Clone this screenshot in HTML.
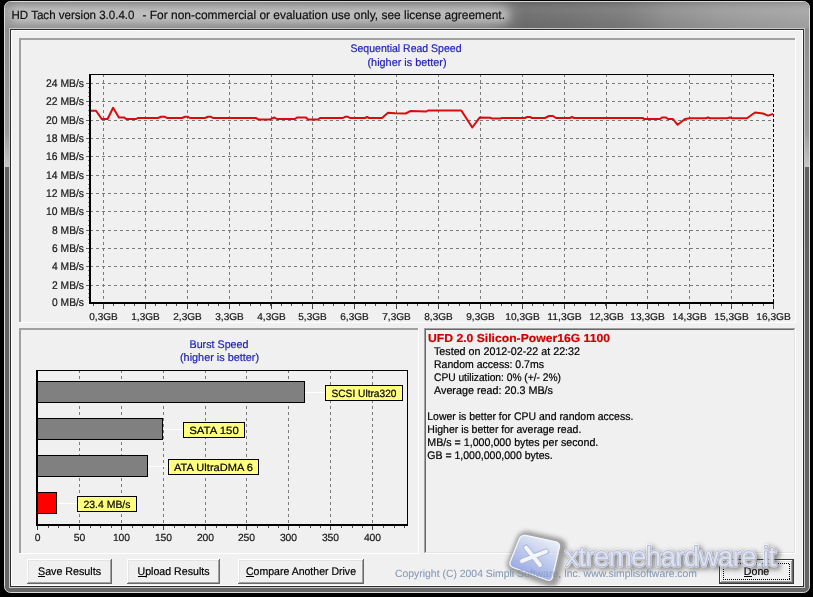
<!DOCTYPE html>
<html><head><meta charset="utf-8"><style>
html,body{margin:0;padding:0;background:#000;width:813px;height:597px;overflow:hidden}
svg{display:block;font-family:"Liberation Sans", sans-serif;will-change:transform}
</style></head><body>
<svg width="813" height="597" viewBox="0 0 813 597" shape-rendering="crispEdges" text-rendering="geometricPrecision">
<defs>
<linearGradient id="side" x1="0" y1="0" x2="0" y2="597" gradientUnits="userSpaceOnUse">
 <stop offset="0" stop-color="#8c8c8c"/>
 <stop offset="0.22" stop-color="#9a9a9a"/>
 <stop offset="0.279" stop-color="#c6c6c6"/>
 <stop offset="0.2800" stop-color="#616161"/>
 <stop offset="1" stop-color="#666"/>
</linearGradient>
<linearGradient id="titleH" x1="0" y1="0" x2="813" y2="0" gradientUnits="userSpaceOnUse">
 <stop offset="0" stop-color="#9a9a9a"/>
 <stop offset="0.60" stop-color="#8a8a8a"/>
 <stop offset="0.645" stop-color="#6e6e6e"/>
 <stop offset="0.70" stop-color="#727272"/>
 <stop offset="0.77" stop-color="#7c7c7c"/>
 <stop offset="0.82" stop-color="#8e8e8e"/>
 <stop offset="0.89" stop-color="#9c9c9c"/>
 <stop offset="1" stop-color="#a6a6a6"/>
</linearGradient>
<linearGradient id="titleV" x1="0" y1="0" x2="0" y2="28" gradientUnits="userSpaceOnUse">
 <stop offset="0" stop-color="#000" stop-opacity="0.18"/>
 <stop offset="0.4" stop-color="#fff" stop-opacity="0.05"/>
 <stop offset="1" stop-color="#000" stop-opacity="0.05"/>
</linearGradient>
<filter id="blur4" x="-20%" y="-50%" width="140%" height="200%"><feGaussianBlur stdDeviation="4"/></filter>
<filter id="blur3" x="-20%" y="-50%" width="140%" height="200%"><feGaussianBlur stdDeviation="2.5"/></filter>
<filter id="blur2" x="-20%" y="-50%" width="140%" height="200%"><feGaussianBlur stdDeviation="2"/></filter>
<linearGradient id="logoG" x1="0.8" y1="0" x2="0.2" y2="1">
 <stop offset="0" stop-color="#f2f5fc"/>
 <stop offset="0.45" stop-color="#b4c2ec"/>
 <stop offset="1" stop-color="#6f88de"/>
</linearGradient>

</defs>
<rect x="0" y="0" width="813" height="597" fill="#000"/>
<rect x="4.5" y="1.5" width="805" height="591" rx="6" ry="6" fill="url(#side)" stroke="#dadada" stroke-width="1" shape-rendering="geometricPrecision"/>
<path d="M5,8 Q5,2 11,2 L803,2 Q809,2 809,8 L809,28 L5,28 Z" fill="url(#titleH)" shape-rendering="geometricPrecision"/>
<path d="M5,8 Q5,2 11,2 L803,2 Q809,2 809,8 L809,28 L5,28 Z" fill="url(#titleV)" shape-rendering="geometricPrecision"/>
<rect x="10" y="7" width="500" height="16" rx="8" fill="#cfcfcf" opacity="0.75" filter="url(#blur4)"/>
<text x="11.5" y="19" font-size="12" fill="#101010" text-anchor="start" font-weight="normal" stroke="#101010" stroke-width="0.2" textLength="123" lengthAdjust="spacingAndGlyphs" >HD Tach version 3.0.4.0</text>
<text x="142.5" y="19" font-size="12" fill="#101010" text-anchor="start" font-weight="normal" stroke="#101010" stroke-width="0.2" textLength="362.5" lengthAdjust="spacingAndGlyphs" >- For non-commercial or evaluation use only, see license agreement.</text>
<rect x="9.5" y="28.5" width="795" height="559" fill="none" stroke="#c8c8c8"/>
<rect x="10.5" y="29.5" width="793" height="557" fill="none" stroke="#2c2c2c"/>
<rect x="11" y="30" width="792" height="556" fill="#ffffff"/>
<rect x="12" y="31" width="790" height="554" fill="#f0f0f0"/>
<rect x="19" y="38" width="776" height="2" fill="#a0a0a0"/>
<rect x="19" y="38" width="2" height="284" fill="#a0a0a0"/>
<rect x="19" y="322" width="777" height="1" fill="#ffffff"/>
<rect x="795" y="38" width="1" height="285" fill="#ffffff"/>
<rect x="19" y="328" width="399" height="2" fill="#a0a0a0"/>
<rect x="19" y="328" width="2" height="225" fill="#a0a0a0"/>
<rect x="19" y="553" width="400" height="1" fill="#ffffff"/>
<rect x="418" y="328" width="1" height="226" fill="#ffffff"/>
<rect x="424" y="328" width="371" height="1" fill="#a0a0a0"/>
<rect x="424" y="328" width="1" height="225" fill="#a0a0a0"/>
<rect x="425" y="329" width="369" height="1" fill="#696969"/>
<rect x="425" y="329" width="1" height="223" fill="#696969"/>
<rect x="424" y="553" width="372" height="1" fill="#ffffff"/>
<rect x="795" y="328" width="1" height="226" fill="#ffffff"/>
<rect x="425" y="552" width="370" height="1" fill="#e3e3e3"/>
<rect x="794" y="329" width="1" height="224" fill="#e3e3e3"/>
<text x="406" y="52" font-size="11" fill="#1e1eb8" text-anchor="middle" font-weight="normal" stroke="#1e1eb8" stroke-width="0.2" textLength="111" lengthAdjust="spacingAndGlyphs" >Sequential Read Speed</text>
<text x="407" y="66" font-size="11" fill="#1e1eb8" text-anchor="middle" font-weight="normal" stroke="#1e1eb8" stroke-width="0.2" textLength="79" lengthAdjust="spacingAndGlyphs" >(higher is better)</text>
<line x1="90" y1="83.5" x2="773" y2="83.5" stroke="#7a7a7a" stroke-dasharray="3,3"/>
<line x1="86" y1="83.5" x2="89" y2="83.5" stroke="#6a6a6a"/>
<text x="84" y="87" font-size="11" fill="#161616" text-anchor="end" font-weight="normal" stroke="#161616" stroke-width="0.2" textLength="38" lengthAdjust="spacingAndGlyphs" >24 MB/s</text>
<rect x="88" y="87" width="1" height="1" fill="#8a8a8a"/>
<rect x="88" y="92" width="1" height="1" fill="#8a8a8a"/>
<rect x="88" y="96" width="1" height="1" fill="#8a8a8a"/>
<line x1="90" y1="101.5" x2="773" y2="101.5" stroke="#7a7a7a" stroke-dasharray="3,3"/>
<line x1="86" y1="101.5" x2="89" y2="101.5" stroke="#6a6a6a"/>
<text x="84" y="105" font-size="11" fill="#161616" text-anchor="end" font-weight="normal" stroke="#161616" stroke-width="0.2" textLength="38" lengthAdjust="spacingAndGlyphs" >22 MB/s</text>
<rect x="88" y="105" width="1" height="1" fill="#8a8a8a"/>
<rect x="88" y="110" width="1" height="1" fill="#8a8a8a"/>
<rect x="88" y="115" width="1" height="1" fill="#8a8a8a"/>
<line x1="90" y1="120.5" x2="773" y2="120.5" stroke="#7a7a7a" stroke-dasharray="3,3"/>
<line x1="86" y1="120.5" x2="89" y2="120.5" stroke="#6a6a6a"/>
<text x="84" y="124" font-size="11" fill="#161616" text-anchor="end" font-weight="normal" stroke="#161616" stroke-width="0.2" textLength="38" lengthAdjust="spacingAndGlyphs" >20 MB/s</text>
<rect x="88" y="124" width="1" height="1" fill="#8a8a8a"/>
<rect x="88" y="129" width="1" height="1" fill="#8a8a8a"/>
<rect x="88" y="133" width="1" height="1" fill="#8a8a8a"/>
<line x1="90" y1="138.5" x2="773" y2="138.5" stroke="#7a7a7a" stroke-dasharray="3,3"/>
<line x1="86" y1="138.5" x2="89" y2="138.5" stroke="#6a6a6a"/>
<text x="84" y="142" font-size="11" fill="#161616" text-anchor="end" font-weight="normal" stroke="#161616" stroke-width="0.2" textLength="38" lengthAdjust="spacingAndGlyphs" >18 MB/s</text>
<rect x="88" y="142" width="1" height="1" fill="#8a8a8a"/>
<rect x="88" y="147" width="1" height="1" fill="#8a8a8a"/>
<rect x="88" y="151" width="1" height="1" fill="#8a8a8a"/>
<line x1="90" y1="156.5" x2="773" y2="156.5" stroke="#7a7a7a" stroke-dasharray="3,3"/>
<line x1="86" y1="156.5" x2="89" y2="156.5" stroke="#6a6a6a"/>
<text x="84" y="160" font-size="11" fill="#161616" text-anchor="end" font-weight="normal" stroke="#161616" stroke-width="0.2" textLength="38" lengthAdjust="spacingAndGlyphs" >16 MB/s</text>
<rect x="88" y="160" width="1" height="1" fill="#8a8a8a"/>
<rect x="88" y="165" width="1" height="1" fill="#8a8a8a"/>
<rect x="88" y="170" width="1" height="1" fill="#8a8a8a"/>
<line x1="90" y1="175.5" x2="773" y2="175.5" stroke="#7a7a7a" stroke-dasharray="3,3"/>
<line x1="86" y1="175.5" x2="89" y2="175.5" stroke="#6a6a6a"/>
<text x="84" y="179" font-size="11" fill="#161616" text-anchor="end" font-weight="normal" stroke="#161616" stroke-width="0.2" textLength="38" lengthAdjust="spacingAndGlyphs" >14 MB/s</text>
<rect x="88" y="179" width="1" height="1" fill="#8a8a8a"/>
<rect x="88" y="184" width="1" height="1" fill="#8a8a8a"/>
<rect x="88" y="188" width="1" height="1" fill="#8a8a8a"/>
<line x1="90" y1="193.5" x2="773" y2="193.5" stroke="#7a7a7a" stroke-dasharray="3,3"/>
<line x1="86" y1="193.5" x2="89" y2="193.5" stroke="#6a6a6a"/>
<text x="84" y="197" font-size="11" fill="#161616" text-anchor="end" font-weight="normal" stroke="#161616" stroke-width="0.2" textLength="38" lengthAdjust="spacingAndGlyphs" >12 MB/s</text>
<rect x="88" y="197" width="1" height="1" fill="#8a8a8a"/>
<rect x="88" y="202" width="1" height="1" fill="#8a8a8a"/>
<rect x="88" y="206" width="1" height="1" fill="#8a8a8a"/>
<line x1="90" y1="211.5" x2="773" y2="211.5" stroke="#7a7a7a" stroke-dasharray="3,3"/>
<line x1="86" y1="211.5" x2="89" y2="211.5" stroke="#6a6a6a"/>
<text x="84" y="215" font-size="11" fill="#161616" text-anchor="end" font-weight="normal" stroke="#161616" stroke-width="0.2" textLength="38" lengthAdjust="spacingAndGlyphs" >10 MB/s</text>
<rect x="88" y="215" width="1" height="1" fill="#8a8a8a"/>
<rect x="88" y="220" width="1" height="1" fill="#8a8a8a"/>
<rect x="88" y="225" width="1" height="1" fill="#8a8a8a"/>
<line x1="90" y1="230.5" x2="773" y2="230.5" stroke="#7a7a7a" stroke-dasharray="3,3"/>
<line x1="86" y1="230.5" x2="89" y2="230.5" stroke="#6a6a6a"/>
<text x="84" y="234" font-size="11" fill="#161616" text-anchor="end" font-weight="normal" stroke="#161616" stroke-width="0.2" textLength="32" lengthAdjust="spacingAndGlyphs" >8 MB/s</text>
<rect x="88" y="234" width="1" height="1" fill="#8a8a8a"/>
<rect x="88" y="239" width="1" height="1" fill="#8a8a8a"/>
<rect x="88" y="243" width="1" height="1" fill="#8a8a8a"/>
<line x1="90" y1="248.5" x2="773" y2="248.5" stroke="#7a7a7a" stroke-dasharray="3,3"/>
<line x1="86" y1="248.5" x2="89" y2="248.5" stroke="#6a6a6a"/>
<text x="84" y="252" font-size="11" fill="#161616" text-anchor="end" font-weight="normal" stroke="#161616" stroke-width="0.2" textLength="32" lengthAdjust="spacingAndGlyphs" >6 MB/s</text>
<rect x="88" y="252" width="1" height="1" fill="#8a8a8a"/>
<rect x="88" y="257" width="1" height="1" fill="#8a8a8a"/>
<rect x="88" y="261" width="1" height="1" fill="#8a8a8a"/>
<line x1="90" y1="266.5" x2="773" y2="266.5" stroke="#7a7a7a" stroke-dasharray="3,3"/>
<line x1="86" y1="266.5" x2="89" y2="266.5" stroke="#6a6a6a"/>
<text x="84" y="270" font-size="11" fill="#161616" text-anchor="end" font-weight="normal" stroke="#161616" stroke-width="0.2" textLength="32" lengthAdjust="spacingAndGlyphs" >4 MB/s</text>
<rect x="88" y="270" width="1" height="1" fill="#8a8a8a"/>
<rect x="88" y="275" width="1" height="1" fill="#8a8a8a"/>
<rect x="88" y="280" width="1" height="1" fill="#8a8a8a"/>
<line x1="90" y1="285.5" x2="773" y2="285.5" stroke="#7a7a7a" stroke-dasharray="3,3"/>
<line x1="86" y1="285.5" x2="89" y2="285.5" stroke="#6a6a6a"/>
<text x="84" y="289" font-size="11" fill="#161616" text-anchor="end" font-weight="normal" stroke="#161616" stroke-width="0.2" textLength="32" lengthAdjust="spacingAndGlyphs" >2 MB/s</text>
<rect x="88" y="289" width="1" height="1" fill="#8a8a8a"/>
<rect x="88" y="293" width="1" height="1" fill="#8a8a8a"/>
<rect x="88" y="297" width="1" height="1" fill="#8a8a8a"/>
<text x="84" y="306" font-size="11" fill="#161616" text-anchor="end" font-weight="normal" stroke="#161616" stroke-width="0.2" textLength="32" lengthAdjust="spacingAndGlyphs" >0 MB/s</text>
<line x1="103.5" y1="74" x2="103.5" y2="302" stroke="#7a7a7a" stroke-dasharray="3,3"/>
<line x1="103.5" y1="304" x2="103.5" y2="309" stroke="#404040"/>
<text x="103.5" y="320" font-size="10" fill="#161616" text-anchor="middle" font-weight="normal" stroke="#161616" stroke-width="0.2" textLength="28.5" lengthAdjust="spacingAndGlyphs" >0,3GB</text>
<line x1="145.5" y1="74" x2="145.5" y2="302" stroke="#7a7a7a" stroke-dasharray="3,3"/>
<line x1="145.5" y1="304" x2="145.5" y2="309" stroke="#404040"/>
<text x="145.5" y="320" font-size="10" fill="#161616" text-anchor="middle" font-weight="normal" stroke="#161616" stroke-width="0.2" textLength="28.5" lengthAdjust="spacingAndGlyphs" >1,3GB</text>
<line x1="187.5" y1="74" x2="187.5" y2="302" stroke="#7a7a7a" stroke-dasharray="3,3"/>
<line x1="187.5" y1="304" x2="187.5" y2="309" stroke="#404040"/>
<text x="187.5" y="320" font-size="10" fill="#161616" text-anchor="middle" font-weight="normal" stroke="#161616" stroke-width="0.2" textLength="28.5" lengthAdjust="spacingAndGlyphs" >2,3GB</text>
<line x1="229.5" y1="74" x2="229.5" y2="302" stroke="#7a7a7a" stroke-dasharray="3,3"/>
<line x1="229.5" y1="304" x2="229.5" y2="309" stroke="#404040"/>
<text x="229.5" y="320" font-size="10" fill="#161616" text-anchor="middle" font-weight="normal" stroke="#161616" stroke-width="0.2" textLength="28.5" lengthAdjust="spacingAndGlyphs" >3,3GB</text>
<line x1="271.5" y1="74" x2="271.5" y2="302" stroke="#7a7a7a" stroke-dasharray="3,3"/>
<line x1="271.5" y1="304" x2="271.5" y2="309" stroke="#404040"/>
<text x="271.5" y="320" font-size="10" fill="#161616" text-anchor="middle" font-weight="normal" stroke="#161616" stroke-width="0.2" textLength="28.5" lengthAdjust="spacingAndGlyphs" >4,3GB</text>
<line x1="312.5" y1="74" x2="312.5" y2="302" stroke="#7a7a7a" stroke-dasharray="3,3"/>
<line x1="312.5" y1="304" x2="312.5" y2="309" stroke="#404040"/>
<text x="312.5" y="320" font-size="10" fill="#161616" text-anchor="middle" font-weight="normal" stroke="#161616" stroke-width="0.2" textLength="28.5" lengthAdjust="spacingAndGlyphs" >5,3GB</text>
<line x1="354.5" y1="74" x2="354.5" y2="302" stroke="#7a7a7a" stroke-dasharray="3,3"/>
<line x1="354.5" y1="304" x2="354.5" y2="309" stroke="#404040"/>
<text x="354.5" y="320" font-size="10" fill="#161616" text-anchor="middle" font-weight="normal" stroke="#161616" stroke-width="0.2" textLength="28.5" lengthAdjust="spacingAndGlyphs" >6,3GB</text>
<line x1="396.5" y1="74" x2="396.5" y2="302" stroke="#7a7a7a" stroke-dasharray="3,3"/>
<line x1="396.5" y1="304" x2="396.5" y2="309" stroke="#404040"/>
<text x="396.5" y="320" font-size="10" fill="#161616" text-anchor="middle" font-weight="normal" stroke="#161616" stroke-width="0.2" textLength="28.5" lengthAdjust="spacingAndGlyphs" >7,3GB</text>
<line x1="438.5" y1="74" x2="438.5" y2="302" stroke="#7a7a7a" stroke-dasharray="3,3"/>
<line x1="438.5" y1="304" x2="438.5" y2="309" stroke="#404040"/>
<text x="438.5" y="320" font-size="10" fill="#161616" text-anchor="middle" font-weight="normal" stroke="#161616" stroke-width="0.2" textLength="28.5" lengthAdjust="spacingAndGlyphs" >8,3GB</text>
<line x1="480.5" y1="74" x2="480.5" y2="302" stroke="#7a7a7a" stroke-dasharray="3,3"/>
<line x1="480.5" y1="304" x2="480.5" y2="309" stroke="#404040"/>
<text x="480.5" y="320" font-size="10" fill="#161616" text-anchor="middle" font-weight="normal" stroke="#161616" stroke-width="0.2" textLength="28.5" lengthAdjust="spacingAndGlyphs" >9,3GB</text>
<line x1="522.5" y1="74" x2="522.5" y2="302" stroke="#7a7a7a" stroke-dasharray="3,3"/>
<line x1="522.5" y1="304" x2="522.5" y2="309" stroke="#404040"/>
<text x="522.5" y="320" font-size="10" fill="#161616" text-anchor="middle" font-weight="normal" stroke="#161616" stroke-width="0.2" textLength="34.5" lengthAdjust="spacingAndGlyphs" >10,3GB</text>
<line x1="564.5" y1="74" x2="564.5" y2="302" stroke="#7a7a7a" stroke-dasharray="3,3"/>
<line x1="564.5" y1="304" x2="564.5" y2="309" stroke="#404040"/>
<text x="564.5" y="320" font-size="10" fill="#161616" text-anchor="middle" font-weight="normal" stroke="#161616" stroke-width="0.2" textLength="34.5" lengthAdjust="spacingAndGlyphs" >11,3GB</text>
<line x1="606.5" y1="74" x2="606.5" y2="302" stroke="#7a7a7a" stroke-dasharray="3,3"/>
<line x1="606.5" y1="304" x2="606.5" y2="309" stroke="#404040"/>
<text x="606.5" y="320" font-size="10" fill="#161616" text-anchor="middle" font-weight="normal" stroke="#161616" stroke-width="0.2" textLength="34.5" lengthAdjust="spacingAndGlyphs" >12,3GB</text>
<line x1="647.5" y1="74" x2="647.5" y2="302" stroke="#7a7a7a" stroke-dasharray="3,3"/>
<line x1="647.5" y1="304" x2="647.5" y2="309" stroke="#404040"/>
<text x="647.5" y="320" font-size="10" fill="#161616" text-anchor="middle" font-weight="normal" stroke="#161616" stroke-width="0.2" textLength="34.5" lengthAdjust="spacingAndGlyphs" >13,3GB</text>
<line x1="689.5" y1="74" x2="689.5" y2="302" stroke="#7a7a7a" stroke-dasharray="3,3"/>
<line x1="689.5" y1="304" x2="689.5" y2="309" stroke="#404040"/>
<text x="689.5" y="320" font-size="10" fill="#161616" text-anchor="middle" font-weight="normal" stroke="#161616" stroke-width="0.2" textLength="34.5" lengthAdjust="spacingAndGlyphs" >14,3GB</text>
<line x1="731.5" y1="74" x2="731.5" y2="302" stroke="#7a7a7a" stroke-dasharray="3,3"/>
<line x1="731.5" y1="304" x2="731.5" y2="309" stroke="#404040"/>
<text x="731.5" y="320" font-size="10" fill="#161616" text-anchor="middle" font-weight="normal" stroke="#161616" stroke-width="0.2" textLength="34.5" lengthAdjust="spacingAndGlyphs" >15,3GB</text>
<line x1="773.5" y1="304" x2="773.5" y2="309" stroke="#404040"/>
<text x="773.5" y="320" font-size="10" fill="#161616" text-anchor="middle" font-weight="normal" stroke="#161616" stroke-width="0.2" textLength="34.5" lengthAdjust="spacingAndGlyphs" >16,3GB</text>
<line x1="93.5" y1="304" x2="93.5" y2="306" stroke="#505050"/>
<line x1="103.5" y1="304" x2="103.5" y2="306" stroke="#505050"/>
<line x1="113.5" y1="304" x2="113.5" y2="306" stroke="#505050"/>
<line x1="124.5" y1="304" x2="124.5" y2="306" stroke="#505050"/>
<line x1="134.5" y1="304" x2="134.5" y2="306" stroke="#505050"/>
<line x1="145.5" y1="304" x2="145.5" y2="306" stroke="#505050"/>
<line x1="155.5" y1="304" x2="155.5" y2="306" stroke="#505050"/>
<line x1="166.5" y1="304" x2="166.5" y2="306" stroke="#505050"/>
<line x1="176.5" y1="304" x2="176.5" y2="306" stroke="#505050"/>
<line x1="187.5" y1="304" x2="187.5" y2="306" stroke="#505050"/>
<line x1="197.5" y1="304" x2="197.5" y2="306" stroke="#505050"/>
<line x1="208.5" y1="304" x2="208.5" y2="306" stroke="#505050"/>
<line x1="218.5" y1="304" x2="218.5" y2="306" stroke="#505050"/>
<line x1="229.5" y1="304" x2="229.5" y2="306" stroke="#505050"/>
<line x1="239.5" y1="304" x2="239.5" y2="306" stroke="#505050"/>
<line x1="250.5" y1="304" x2="250.5" y2="306" stroke="#505050"/>
<line x1="260.5" y1="304" x2="260.5" y2="306" stroke="#505050"/>
<line x1="270.5" y1="304" x2="270.5" y2="306" stroke="#505050"/>
<line x1="281.5" y1="304" x2="281.5" y2="306" stroke="#505050"/>
<line x1="291.5" y1="304" x2="291.5" y2="306" stroke="#505050"/>
<line x1="302.5" y1="304" x2="302.5" y2="306" stroke="#505050"/>
<line x1="312.5" y1="304" x2="312.5" y2="306" stroke="#505050"/>
<line x1="323.5" y1="304" x2="323.5" y2="306" stroke="#505050"/>
<line x1="333.5" y1="304" x2="333.5" y2="306" stroke="#505050"/>
<line x1="344.5" y1="304" x2="344.5" y2="306" stroke="#505050"/>
<line x1="354.5" y1="304" x2="354.5" y2="306" stroke="#505050"/>
<line x1="365.5" y1="304" x2="365.5" y2="306" stroke="#505050"/>
<line x1="375.5" y1="304" x2="375.5" y2="306" stroke="#505050"/>
<line x1="386.5" y1="304" x2="386.5" y2="306" stroke="#505050"/>
<line x1="396.5" y1="304" x2="396.5" y2="306" stroke="#505050"/>
<line x1="407.5" y1="304" x2="407.5" y2="306" stroke="#505050"/>
<line x1="417.5" y1="304" x2="417.5" y2="306" stroke="#505050"/>
<line x1="428.5" y1="304" x2="428.5" y2="306" stroke="#505050"/>
<line x1="438.5" y1="304" x2="438.5" y2="306" stroke="#505050"/>
<line x1="448.5" y1="304" x2="448.5" y2="306" stroke="#505050"/>
<line x1="459.5" y1="304" x2="459.5" y2="306" stroke="#505050"/>
<line x1="469.5" y1="304" x2="469.5" y2="306" stroke="#505050"/>
<line x1="480.5" y1="304" x2="480.5" y2="306" stroke="#505050"/>
<line x1="490.5" y1="304" x2="490.5" y2="306" stroke="#505050"/>
<line x1="501.5" y1="304" x2="501.5" y2="306" stroke="#505050"/>
<line x1="511.5" y1="304" x2="511.5" y2="306" stroke="#505050"/>
<line x1="522.5" y1="304" x2="522.5" y2="306" stroke="#505050"/>
<line x1="532.5" y1="304" x2="532.5" y2="306" stroke="#505050"/>
<line x1="543.5" y1="304" x2="543.5" y2="306" stroke="#505050"/>
<line x1="553.5" y1="304" x2="553.5" y2="306" stroke="#505050"/>
<line x1="564.5" y1="304" x2="564.5" y2="306" stroke="#505050"/>
<line x1="574.5" y1="304" x2="574.5" y2="306" stroke="#505050"/>
<line x1="585.5" y1="304" x2="585.5" y2="306" stroke="#505050"/>
<line x1="595.5" y1="304" x2="595.5" y2="306" stroke="#505050"/>
<line x1="605.5" y1="304" x2="605.5" y2="306" stroke="#505050"/>
<line x1="616.5" y1="304" x2="616.5" y2="306" stroke="#505050"/>
<line x1="626.5" y1="304" x2="626.5" y2="306" stroke="#505050"/>
<line x1="637.5" y1="304" x2="637.5" y2="306" stroke="#505050"/>
<line x1="647.5" y1="304" x2="647.5" y2="306" stroke="#505050"/>
<line x1="658.5" y1="304" x2="658.5" y2="306" stroke="#505050"/>
<line x1="668.5" y1="304" x2="668.5" y2="306" stroke="#505050"/>
<line x1="679.5" y1="304" x2="679.5" y2="306" stroke="#505050"/>
<line x1="689.5" y1="304" x2="689.5" y2="306" stroke="#505050"/>
<line x1="700.5" y1="304" x2="700.5" y2="306" stroke="#505050"/>
<line x1="710.5" y1="304" x2="710.5" y2="306" stroke="#505050"/>
<line x1="721.5" y1="304" x2="721.5" y2="306" stroke="#505050"/>
<line x1="731.5" y1="304" x2="731.5" y2="306" stroke="#505050"/>
<line x1="742.5" y1="304" x2="742.5" y2="306" stroke="#505050"/>
<line x1="752.5" y1="304" x2="752.5" y2="306" stroke="#505050"/>
<line x1="763.5" y1="304" x2="763.5" y2="306" stroke="#505050"/>
<line x1="773.5" y1="304" x2="773.5" y2="306" stroke="#505050"/>
<line x1="773.5" y1="74" x2="773.5" y2="302" stroke="#000" stroke-dasharray="3,2"/>
<rect x="89" y="74" width="685" height="1" fill="#000"/>
<rect x="89" y="74" width="2" height="230" fill="#000"/>
<rect x="89" y="302" width="685" height="2" fill="#000"/>
<polyline fill="none" stroke="#d80c0c" stroke-width="2" stroke-linejoin="round" shape-rendering="geometricPrecision" points="91,110.7 96,110.7 101.7,119 107.6,119 113.1,107.8 118.9,117.6 124.4,117.6 126.3,119 136.2,119 137.8,118 158,118 161,116.8 165,116.8 167,118 182,118 185,116.8 188,116.8 190,118 205,118 208,116.8 211,116.8 213,118 255.7,118 259,119.6 269.5,119.6 274.4,117.5 277,119 295,119 297,117.5 306,117.5 308,119.5 318,119.5 320,118 343,118 345,116.8 348,116.8 350,118 365,118 367,117 369,118 382,118 388,112.7 395,113.2 405.7,113.5 410.7,110.9 426.4,111.5 428,110.5 461.3,110.5 472.3,127.5 479.6,117.6 490,117.8 492,118.5 500,118.5 502,118 525,118 527,117 530,117 532,118 545,118 549,116 553,116 556,118 570,118 572,117 574,118 643,118 644,119 660,119 662,117.5 666,117.5 668,119 673,119 677.6,124.8 685,119 690,118.3 706,118.3 708,117.5 710,118.3 727,118.3 730,117.5 732,118.3 747,118.3 755,112.5 763,113.5 768,115.6 773,114"/>
<text x="219" y="348" font-size="11" fill="#1e1eb8" text-anchor="middle" font-weight="normal" stroke="#1e1eb8" stroke-width="0.2" textLength="59" lengthAdjust="spacingAndGlyphs" >Burst Speed</text>
<text x="219.5" y="361" font-size="11" fill="#1e1eb8" text-anchor="middle" font-weight="normal" stroke="#1e1eb8" stroke-width="0.2" textLength="79" lengthAdjust="spacingAndGlyphs" >(higher is better)</text>
<line x1="37.5" y1="526" x2="37.5" y2="530" stroke="#404040"/>
<text x="37.5" y="541" font-size="10.3" fill="#161616" text-anchor="middle" font-weight="normal" stroke="#161616" stroke-width="0.2" textLength="5.75" lengthAdjust="spacingAndGlyphs" >0</text>
<line x1="79.5" y1="370" x2="79.5" y2="524" stroke="#7a7a7a" stroke-dasharray="3,3"/>
<line x1="79.5" y1="526" x2="79.5" y2="530" stroke="#404040"/>
<text x="79.5" y="541" font-size="10.3" fill="#161616" text-anchor="middle" font-weight="normal" stroke="#161616" stroke-width="0.2" textLength="11.5" lengthAdjust="spacingAndGlyphs" >50</text>
<line x1="121.5" y1="370" x2="121.5" y2="524" stroke="#7a7a7a" stroke-dasharray="3,3"/>
<line x1="121.5" y1="526" x2="121.5" y2="530" stroke="#404040"/>
<text x="121.5" y="541" font-size="10.3" fill="#161616" text-anchor="middle" font-weight="normal" stroke="#161616" stroke-width="0.2" textLength="17.25" lengthAdjust="spacingAndGlyphs" >100</text>
<line x1="163.5" y1="370" x2="163.5" y2="524" stroke="#7a7a7a" stroke-dasharray="3,3"/>
<line x1="163.5" y1="526" x2="163.5" y2="530" stroke="#404040"/>
<text x="163.5" y="541" font-size="10.3" fill="#161616" text-anchor="middle" font-weight="normal" stroke="#161616" stroke-width="0.2" textLength="17.25" lengthAdjust="spacingAndGlyphs" >150</text>
<line x1="205.5" y1="370" x2="205.5" y2="524" stroke="#7a7a7a" stroke-dasharray="3,3"/>
<line x1="205.5" y1="526" x2="205.5" y2="530" stroke="#404040"/>
<text x="205.5" y="541" font-size="10.3" fill="#161616" text-anchor="middle" font-weight="normal" stroke="#161616" stroke-width="0.2" textLength="17.25" lengthAdjust="spacingAndGlyphs" >200</text>
<line x1="246.5" y1="370" x2="246.5" y2="524" stroke="#7a7a7a" stroke-dasharray="3,3"/>
<line x1="246.5" y1="526" x2="246.5" y2="530" stroke="#404040"/>
<text x="246.5" y="541" font-size="10.3" fill="#161616" text-anchor="middle" font-weight="normal" stroke="#161616" stroke-width="0.2" textLength="17.25" lengthAdjust="spacingAndGlyphs" >250</text>
<line x1="288.5" y1="370" x2="288.5" y2="524" stroke="#7a7a7a" stroke-dasharray="3,3"/>
<line x1="288.5" y1="526" x2="288.5" y2="530" stroke="#404040"/>
<text x="288.5" y="541" font-size="10.3" fill="#161616" text-anchor="middle" font-weight="normal" stroke="#161616" stroke-width="0.2" textLength="17.25" lengthAdjust="spacingAndGlyphs" >300</text>
<line x1="330.5" y1="370" x2="330.5" y2="524" stroke="#7a7a7a" stroke-dasharray="3,3"/>
<line x1="330.5" y1="526" x2="330.5" y2="530" stroke="#404040"/>
<text x="330.5" y="541" font-size="10.3" fill="#161616" text-anchor="middle" font-weight="normal" stroke="#161616" stroke-width="0.2" textLength="17.25" lengthAdjust="spacingAndGlyphs" >350</text>
<line x1="372.5" y1="370" x2="372.5" y2="524" stroke="#7a7a7a" stroke-dasharray="3,3"/>
<line x1="372.5" y1="526" x2="372.5" y2="530" stroke="#404040"/>
<text x="372.5" y="541" font-size="10.3" fill="#161616" text-anchor="middle" font-weight="normal" stroke="#161616" stroke-width="0.2" textLength="17.25" lengthAdjust="spacingAndGlyphs" >400</text>
<line x1="48" y1="526" x2="48" y2="528" stroke="#505050"/>
<line x1="58" y1="526" x2="58" y2="528" stroke="#505050"/>
<line x1="69" y1="526" x2="69" y2="528" stroke="#505050"/>
<line x1="90" y1="526" x2="90" y2="528" stroke="#505050"/>
<line x1="100" y1="526" x2="100" y2="528" stroke="#505050"/>
<line x1="111" y1="526" x2="111" y2="528" stroke="#505050"/>
<line x1="132" y1="526" x2="132" y2="528" stroke="#505050"/>
<line x1="142" y1="526" x2="142" y2="528" stroke="#505050"/>
<line x1="153" y1="526" x2="153" y2="528" stroke="#505050"/>
<line x1="174" y1="526" x2="174" y2="528" stroke="#505050"/>
<line x1="184" y1="526" x2="184" y2="528" stroke="#505050"/>
<line x1="195" y1="526" x2="195" y2="528" stroke="#505050"/>
<line x1="216" y1="526" x2="216" y2="528" stroke="#505050"/>
<line x1="226" y1="526" x2="226" y2="528" stroke="#505050"/>
<line x1="237" y1="526" x2="237" y2="528" stroke="#505050"/>
<line x1="257" y1="526" x2="257" y2="528" stroke="#505050"/>
<line x1="268" y1="526" x2="268" y2="528" stroke="#505050"/>
<line x1="278" y1="526" x2="278" y2="528" stroke="#505050"/>
<line x1="299" y1="526" x2="299" y2="528" stroke="#505050"/>
<line x1="310" y1="526" x2="310" y2="528" stroke="#505050"/>
<line x1="320" y1="526" x2="320" y2="528" stroke="#505050"/>
<line x1="341" y1="526" x2="341" y2="528" stroke="#505050"/>
<line x1="352" y1="526" x2="352" y2="528" stroke="#505050"/>
<line x1="362" y1="526" x2="362" y2="528" stroke="#505050"/>
<line x1="383" y1="526" x2="383" y2="528" stroke="#505050"/>
<line x1="394" y1="526" x2="394" y2="528" stroke="#505050"/>
<line x1="404" y1="526" x2="404" y2="528" stroke="#505050"/>
<rect x="36" y="370" width="372" height="1" fill="#000"/>
<rect x="407" y="370" width="1" height="155" fill="#000"/>
<rect x="36" y="370" width="2" height="156" fill="#000"/>
<rect x="36" y="524" width="372" height="2" fill="#000"/>
<rect x="37.5" y="381.5" width="267" height="21" fill="#808080" stroke="#000"/>
<rect x="305" y="392" width="20" height="1" fill="#ffffff"/>
<rect x="325.5" y="385.5" width="77" height="15" fill="#ffff80" stroke="#000"/>
<text x="364.0" y="397" font-size="10.5" fill="#000" text-anchor="middle" font-weight="normal" stroke="#000" stroke-width="0.2" textLength="65" lengthAdjust="spacingAndGlyphs" >SCSI Ultra320</text>
<rect x="37.5" y="418.5" width="125" height="21" fill="#808080" stroke="#000"/>
<rect x="163" y="429" width="20" height="1" fill="#ffffff"/>
<rect x="183.5" y="422.5" width="61" height="15" fill="#ffff80" stroke="#000"/>
<text x="214.0" y="434" font-size="10.5" fill="#000" text-anchor="middle" font-weight="normal" stroke="#000" stroke-width="0.2" textLength="49.5" lengthAdjust="spacingAndGlyphs" >SATA 150</text>
<rect x="37.5" y="455.5" width="110" height="21" fill="#808080" stroke="#000"/>
<rect x="148" y="466" width="20" height="1" fill="#ffffff"/>
<rect x="168.5" y="459.5" width="90" height="15" fill="#ffff80" stroke="#000"/>
<text x="213.5" y="471" font-size="10.5" fill="#000" text-anchor="middle" font-weight="normal" stroke="#000" stroke-width="0.2" textLength="79" lengthAdjust="spacingAndGlyphs" >ATA UltraDMA 6</text>
<rect x="37.5" y="492.5" width="19" height="21" fill="#ff0000" stroke="#000"/>
<rect x="57" y="503" width="20" height="1" fill="#ffffff"/>
<rect x="77.5" y="496.5" width="59" height="15" fill="#ffff80" stroke="#000"/>
<text x="107.0" y="508" font-size="10.5" fill="#000" text-anchor="middle" font-weight="normal" stroke="#000" stroke-width="0.2" textLength="47" lengthAdjust="spacingAndGlyphs" >23.4 MB/s</text>
<text x="428" y="342" font-size="11.5" fill="#d00000" text-anchor="start" font-weight="bold" stroke="#d00000" stroke-width="0.2" textLength="182" lengthAdjust="spacingAndGlyphs" >UFD 2.0 Silicon-Power16G 1100</text>
<text x="434" y="355" font-size="11" fill="#000" text-anchor="start" font-weight="normal" stroke="#000" stroke-width="0.2" textLength="146" lengthAdjust="spacingAndGlyphs" >Tested on 2012-02-22 at 22:32</text>
<text x="434" y="368" font-size="11" fill="#000" text-anchor="start" font-weight="normal" stroke="#000" stroke-width="0.2" textLength="110" lengthAdjust="spacingAndGlyphs" >Random access: 0.7ms</text>
<text x="434" y="381" font-size="11" fill="#000" text-anchor="start" font-weight="normal" stroke="#000" stroke-width="0.2" textLength="127" lengthAdjust="spacingAndGlyphs" >CPU utilization: 0% (+/- 2%)</text>
<text x="434" y="394" font-size="11" fill="#000" text-anchor="start" font-weight="normal" stroke="#000" stroke-width="0.2" textLength="119" lengthAdjust="spacingAndGlyphs" >Average read: 20.3 MB/s</text>
<text x="427.3" y="420" font-size="11" fill="#000" text-anchor="start" font-weight="normal" stroke="#000" stroke-width="0.2" textLength="206" lengthAdjust="spacingAndGlyphs" >Lower is better for CPU and random access.</text>
<text x="427.3" y="433" font-size="11" fill="#000" text-anchor="start" font-weight="normal" stroke="#000" stroke-width="0.2" textLength="154" lengthAdjust="spacingAndGlyphs" >Higher is better for average read.</text>
<text x="427.3" y="446" font-size="11" fill="#000" text-anchor="start" font-weight="normal" stroke="#000" stroke-width="0.2" textLength="171" lengthAdjust="spacingAndGlyphs" >MB/s = 1,000,000 bytes per second.</text>
<text x="427.3" y="459" font-size="11" fill="#000" text-anchor="start" font-weight="normal" stroke="#000" stroke-width="0.2" textLength="125.5" lengthAdjust="spacingAndGlyphs" >GB = 1,000,000,000 bytes.</text>
<text x="395" y="577" font-size="10.5" fill="#94a6c0" text-anchor="start" font-weight="normal" stroke="#94a6c0" stroke-width="0" textLength="302" lengthAdjust="spacingAndGlyphs" >Copyright (C) 2004 Simpli Software, Inc. www.simplisoftware.com</text>
<rect x="27" y="559" width="85" height="25" fill="#696969"/>
<rect x="27" y="559" width="84" height="24" fill="#ffffff"/>
<rect x="28" y="560" width="83" height="23" fill="#a0a0a0"/>
<rect x="28" y="560" width="82" height="22" fill="#e3e3e3"/>
<rect x="29" y="561" width="81" height="21" fill="#f0f0f0"/>
<text x="69.5" y="575" font-size="11" fill="#000" text-anchor="middle" font-weight="normal" stroke="#000" stroke-width="0.2" textLength="63" lengthAdjust="spacingAndGlyphs" >Save Results</text>
<rect x="38" y="576" width="7" height="1" fill="#000"/>
<rect x="127" y="559" width="93" height="25" fill="#696969"/>
<rect x="127" y="559" width="92" height="24" fill="#ffffff"/>
<rect x="128" y="560" width="91" height="23" fill="#a0a0a0"/>
<rect x="128" y="560" width="90" height="22" fill="#e3e3e3"/>
<rect x="129" y="561" width="89" height="21" fill="#f0f0f0"/>
<text x="173.5" y="575" font-size="11" fill="#000" text-anchor="middle" font-weight="normal" stroke="#000" stroke-width="0.2" textLength="72" lengthAdjust="spacingAndGlyphs" >Upload Results</text>
<rect x="138" y="576" width="8" height="1" fill="#000"/>
<rect x="238" y="559" width="126" height="25" fill="#696969"/>
<rect x="238" y="559" width="125" height="24" fill="#ffffff"/>
<rect x="239" y="560" width="124" height="23" fill="#a0a0a0"/>
<rect x="239" y="560" width="123" height="22" fill="#e3e3e3"/>
<rect x="240" y="561" width="122" height="21" fill="#f0f0f0"/>
<text x="301.0" y="575" font-size="11" fill="#000" text-anchor="middle" font-weight="normal" stroke="#000" stroke-width="0.2" textLength="110" lengthAdjust="spacingAndGlyphs" >Compare Another Drive</text>
<rect x="246" y="576" width="8" height="1" fill="#000"/>
<rect x="719" y="559" width="75" height="25" fill="#3a3a3a"/>
<rect x="720" y="560" width="73" height="23" fill="#696969"/>
<rect x="720" y="560" width="72" height="22" fill="#ffffff"/>
<rect x="721" y="561" width="71" height="21" fill="#a0a0a0"/>
<rect x="721" y="561" width="70" height="20" fill="#e3e3e3"/>
<rect x="722" y="562" width="69" height="19" fill="#f0f0f0"/>
<text x="756.5" y="575" font-size="11" fill="#000" text-anchor="middle" font-weight="normal" stroke="#000" stroke-width="0.2" textLength="25.5" lengthAdjust="spacingAndGlyphs" >Done</text>
<rect x="744" y="576" width="8" height="1" fill="#000"/>
<rect x="723.5" y="563.5" width="66" height="16" fill="none" stroke="#000" stroke-dasharray="1,1"/>
<g opacity="0.78" shape-rendering="geometricPrecision">
<path d="M526,535.5 L556,541.8 Q560,542.8 559.5,547 L552.5,577 Q551.5,581.5 547,580 L513,567.5 Q508.5,565.5 510.5,561 L519.5,538.5 Q521.5,534.5 526,535.5 Z" transform="translate(2,1)" fill="#7a7a7a" stroke="#7a7a7a" stroke-width="10" stroke-linejoin="round" opacity="0.9" filter="url(#blur2)"/>
<path d="M526,535.5 L556,541.8 Q560,542.8 559.5,547 L552.5,577 Q551.5,581.5 547,580 L513,567.5 Q508.5,565.5 510.5,561 L519.5,538.5 Q521.5,534.5 526,535.5 Z" fill="url(#logoG)" stroke="#f6f8fc" stroke-width="1.3"/>
<path d="M526,547.5 L540,565 M546,551.5 L522,561" stroke="#a0acd2" stroke-width="6" stroke-linecap="round"/>
<path d="M526,547.5 L540,565 M546,551.5 L522,561" stroke="#f6f8fc" stroke-width="3.8" stroke-linecap="round"/>
</g>
<g shape-rendering="geometricPrecision">
<text x="567" y="568" font-size="28" fill="#444" opacity="0.6" filter="url(#blur3)" textLength="212" lengthAdjust="spacing" stroke="#444" stroke-width="3.5">xtremehardware.it</text>
<text x="565" y="566" font-size="28" fill="none" stroke="#ffffff" stroke-width="2.8" stroke-linejoin="round" opacity="0.7" textLength="211" lengthAdjust="spacing">xtremehardware.it</text>
<text x="565" y="566" font-size="28" fill="#dfe3f3" stroke="#98a2cc" stroke-width="1.3" stroke-linejoin="round" paint-order="stroke" opacity="0.85" textLength="211" lengthAdjust="spacing">xtremehardware.it</text>
</g>
<g opacity="0.5">
<text x="395" y="577" font-size="10.5" fill="#8898b4" text-anchor="start" font-weight="normal" stroke="#8898b4" stroke-width="0" textLength="302" lengthAdjust="spacingAndGlyphs" >Copyright (C) 2004 Simpli Software, Inc. www.simplisoftware.com</text>
</g>
</svg>
</body></html>
